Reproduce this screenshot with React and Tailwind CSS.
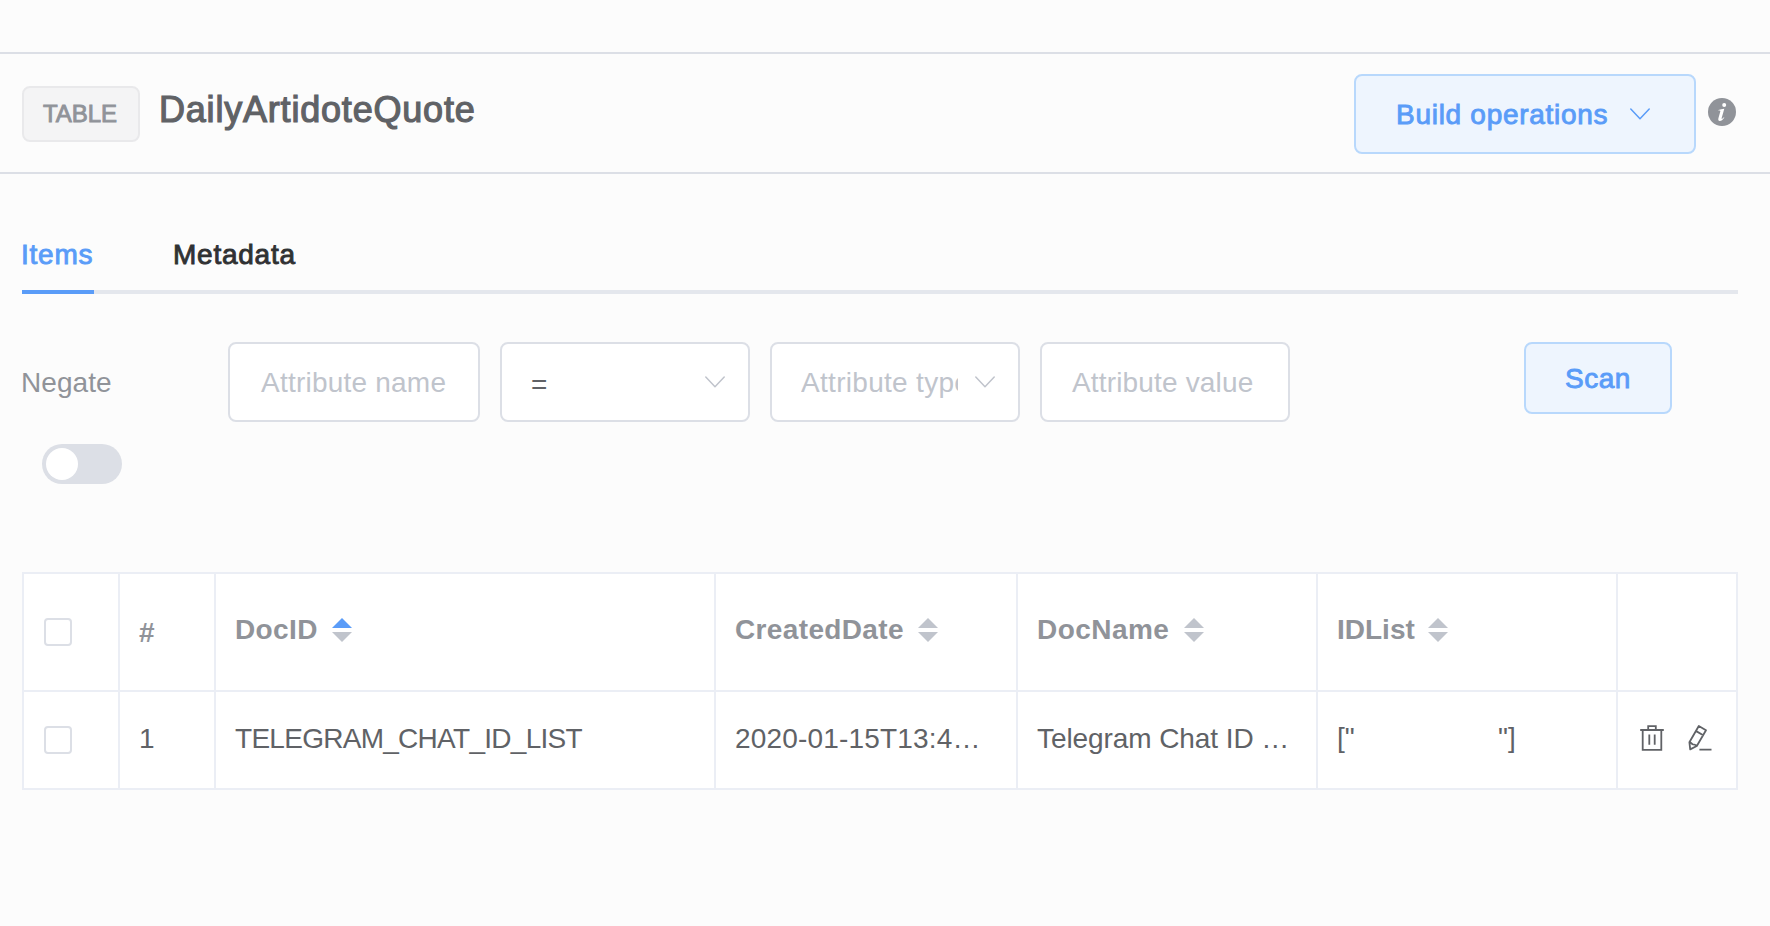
const columns = [
  { name: 'DocID', active: true, label: 'tracking-[0.4px] w-[97px]' },
  { name: 'CreatedDate', label: 'tracking-[0.36px] w-[183px]' },
  { name: 'DocName', label: 'tracking-[0.45px] w-[147px]' },
  { name: 'IDList', label: 'tracking-[0px] w-[91px]' },
];

const medium = '[-webkit-text-stroke:0.9px_currentColor]';

function Chevron({ className }) {
  return (
    <svg className={className} width="20" height="12" viewBox="0 0 20 12" fill="none" stroke="currentColor" strokeWidth="1.5" strokeLinecap="round" strokeLinejoin="round">
      <path d="M0.8 1 10 10.7 19.2 1" />
    </svg>
  );
}

function Sort({ active }) {
  return (
    <svg width="20" height="24" viewBox="0 0 20 24" className="shrink-0">
      <path d="M0 10 10 0 20 10Z" fill={active ? '#5a9cf8' : '#c0c4cc'} />
      <path d="M0 14 10 24 20 14Z" fill="#c0c4cc" />
    </svg>
  );
}

function Checkbox() {
  return <span className="block size-7 rounded-[4px] border-2 border-[#dcdfe6] bg-white" />;
}

function Cell({ className = '', children }) {
  return <div className={`flex items-center overflow-hidden whitespace-nowrap border-r-2 border-b-2 border-[#ebeef5] ${className}`}>{children}</div>;
}

function TrashIcon() {
  return (
    <svg width="24" height="26" viewBox="0 0 24 26" fill="none" stroke="#606266" strokeWidth="1.8">
      <path d="M0.2 5H23.8M2.7 5V24.8H21.3V5M8.2 5V1.2H15.8V5M9.3 9.6V19.8M14.7 9.6V19.8" />
    </svg>
  );
}

function EditIcon() {
  return (
    <svg width="24" height="26" viewBox="0 0 24 26" fill="none" stroke="#606266" strokeWidth="1.8" strokeLinejoin="round">
      <path d="M10.8 1 18 5.2 8.8 21 2.2 24.4 1.4 17.2ZM8.2 6.1 15.2 10.2M1.4 17.2C3.4 17.6 3.8 19.2 5 19.3C6.6 19.3 7.4 19.7 8.8 21M11.4 24.6H23.5" />
    </svg>
  );
}

export default function App() {
  return (
    <div className="h-[926px] w-[1770px] overflow-hidden bg-[#fcfcfc] font-['Liberation_Sans',sans-serif] text-[28px] leading-[40px] text-[#606266]">
      <div className="h-[52px]" />
      <header className="flex h-[122px] items-center border-y-2 border-[#dcdfe6] pl-[22px] pr-[34px] pt-[2px]">
        <span className={`flex h-14 w-[118px] items-center justify-center rounded-[8px] border-2 border-[#e9e9eb] bg-[#f4f4f5] pr-[2px] text-[24px] text-[#909399] ${medium}`}>TABLE</span>
        <h1 className={`mb-[8px] ml-[19px] text-[36px] tracking-[0.8px] [-webkit-text-stroke:1.2px_currentColor]`}>DailyArtidoteQuote</h1>
        <button className="ml-auto flex h-20 w-[342px] items-center rounded-[8px] border-2 border-[#b8d8fc] bg-[#eef5fe] pl-10 text-[#5a9cf8]">
          <span className={`w-[234px] pt-px text-left tracking-[0.72px] ${medium}`}>Build operations</span>
          <Chevron />
        </button>
        <svg className="mb-1 ml-3" width="28" height="28" viewBox="0 0 28 28">
          <circle cx="14" cy="14" r="14" fill="#909399" />
          <circle cx="16.2" cy="7" r="2" fill="#fff" />
          <path d="M10.4 11.9C12.4 11.6 14.2 11 16.3 10.7L13.6 20.2C13.4 21.2 14 21.2 15.9 19.2L16.4 19.6C14.8 22.1 13.2 23 11.8 23C10.4 23 10 21.9 10.4 20.3L12.3 13.6C12.6 12.5 11.9 12.4 10.4 12.5Z" fill="#fff" />
        </svg>
      </header>

      <nav className="ml-[22px] mt-[60px] flex w-[1716px]">
        <span className={`h-[60px] w-[72px] border-b-4 border-[#5a9cf8] pt-px tracking-[0.75px] text-[#5a9cf8] ${medium}`}><span className="-ml-px">Items</span></span>
        <span className={`h-[60px] flex-1 border-b-4 border-[#e4e7ed] pl-[79px] pt-px tracking-[0.75px] text-[#303133] ${medium}`}>Metadata</span>
      </nav>

      <section className="mt-12 flex items-start pl-[22px]">
        <div className="w-[206px] pt-[21px] text-[#909399]">
          <span className="-ml-px tracking-[0.08px]">Negate</span>
          <div className="ml-5 mt-[41px] flex h-10 w-20 items-center rounded-full bg-[#dcdfe6] pl-1">
            <span className="size-8 rounded-full bg-white" />
          </div>
        </div>
        <div className="flex gap-5 tracking-[0.22px] text-[#c0c4cc]">
          <div className="flex h-20 w-[252px] items-center rounded-[8px] border-2 border-[#dcdfe6] bg-white pl-[31px] pt-[2px]">Attribute name</div>
          <div className="flex h-20 w-[250px] items-center justify-between rounded-[8px] border-2 border-[#dcdfe6] bg-white pl-[29px] pr-[23px]">
            <span className="pt-[5px] text-[#606266]">=</span>
            <Chevron />
          </div>
          <div className="flex h-20 w-[250px] items-center justify-between rounded-[8px] border-2 border-[#dcdfe6] bg-white pl-[29px] pr-[23px]">
            <span className="w-[157px] overflow-hidden whitespace-nowrap pt-[2px] tracking-[0.3px]">Attribute type</span>
            <Chevron />
          </div>
          <div className="flex h-20 w-[250px] items-center rounded-[8px] border-2 border-[#dcdfe6] bg-white pl-[30px] pt-[2px] tracking-[0.16px]">Attribute value</div>
        </div>
        <button className={`ml-[234px] flex h-[72px] w-[148px] items-center justify-center rounded-[8px] border-2 border-[#b8d8fc] bg-[#eef5fe] pt-[2px] tracking-[0.5px] text-[#5a9cf8] ${medium}`}>Scan</button>
      </section>

      <section className="ml-[22px] mt-[88px] grid w-[1716px] grid-cols-[96px_96px_500px_302px_300px_300px_120px] grid-rows-[118px_98px] border-l-2 border-t-2 border-[#ebeef5] bg-white">
        <Cell className="pl-5"><Checkbox /></Cell>
        <Cell className="pl-[19px] pt-[2px] font-bold text-[#909399]">#</Cell>
        {columns.map((c) => (
          <Cell key={c.name} className="pb-1 pl-[19px] font-bold text-[#909399]">
            <span className={c.label}>{c.name}</span>
            <Sort active={c.active} />
          </Cell>
        ))}
        <Cell />
        <Cell className="pl-5"><Checkbox /></Cell>
        <Cell className="pb-[2px] pl-[19px]">1</Cell>
        <Cell className="pb-[2px] pl-[19px] tracking-[-0.72px]">TELEGRAM_CHAT_ID_LIST</Cell>
        <Cell className="pb-[2px] pl-[19px] tracking-[0.18px]">2020-01-15T13:4…</Cell>
        <Cell className="pb-[2px] pl-[19px] tracking-[-0.08px]">Telegram Chat ID …</Cell>
        <Cell className="pb-[4px] pl-[19px]"><span className="w-[161px]">["</span><span>"]</span></Cell>
        <Cell className="gap-[24px] pb-1 pl-[22px]"><TrashIcon /><EditIcon /></Cell>
      </section>
    </div>
  );
}
